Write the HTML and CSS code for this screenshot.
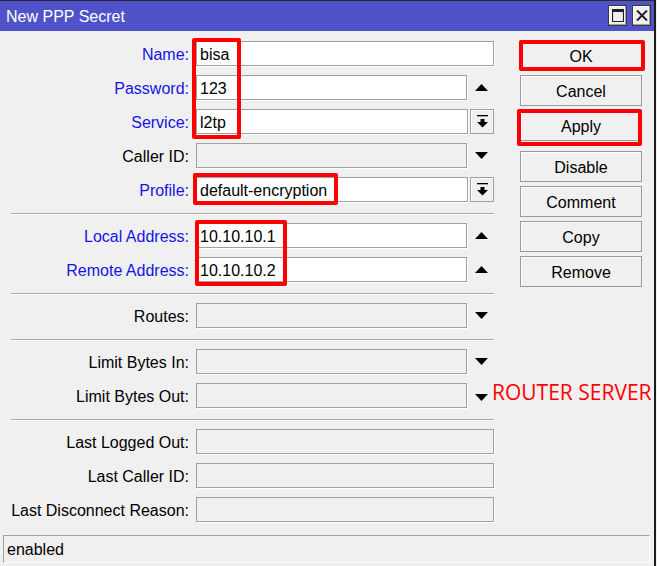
FILE: index.html
```html
<!DOCTYPE html>
<html lang="en">
<head>
    <meta charset="UTF-8">
    <meta name="viewport" content="width=device-width, initial-scale=1.0">
    <title>New PPP Secret</title>
    <link rel="stylesheet" href="styles.css">
</head>
<body>
    <div class="window">
        <!-- Barra de titulo -->
        <div class="titlebar">
            <span class="title">New PPP Secret</span>
            <div class="title-btns">
                <span class="tbtn">
                    <svg width="12" height="13" viewBox="0 0 12 13"><path d="M0.5 0.5 H11.5 V12.5 H0.5 Z M0.5 2 H11.5" fill="none" stroke="#222" stroke-width="1.2"/><rect x="0" y="0" width="12" height="3" fill="#222"/></svg>
                </span>
                <span class="tbtn">
                    <svg width="12" height="11" viewBox="0 0 12 11"><path d="M1 0.5 L11 10.5 M11 0.5 L1 10.5" stroke="#222" stroke-width="2"/></svg>
                </span>
            </div>
        </div>

        <div class="content">
            <!-- Campos do formulario -->
            <div class="form">
                <div class="row">
                    <span class="lbl blue">Name:</span>
                    <div class="field"><div class="input white">bisa</div></div>
                </div>
                <div class="row">
                    <span class="lbl blue">Password:</span>
                    <div class="field">
                        <div class="input white">123</div>
                        <span class="arrow"><svg width="13" height="7" viewBox="0 0 13 7"><path d="M6.5 0 L13 7 H0 Z"/></svg></span>
                    </div>
                </div>
                <div class="row">
                    <span class="lbl blue">Service:</span>
                    <div class="field">
                        <div class="input white">l2tp</div>
                        <span class="pick"><svg width="11" height="13" viewBox="0 0 11 13"><rect x="0" y="0" width="11" height="1.3"/><rect x="3.5" y="4" width="4" height="3.5"/><path d="M0 7 H11 L5.5 12.5 Z"/></svg></span>
                    </div>
                </div>
                <div class="row">
                    <span class="lbl">Caller ID:</span>
                    <div class="field">
                        <div class="input"></div>
                        <span class="arrow"><svg width="13" height="7" viewBox="0 0 13 7"><path d="M0 0 H13 L6.5 7 Z"/></svg></span>
                    </div>
                </div>
                <div class="row">
                    <span class="lbl blue">Profile:</span>
                    <div class="field">
                        <div class="input white">default-encryption</div>
                        <span class="pick"><svg width="11" height="13" viewBox="0 0 11 13"><rect x="0" y="0" width="11" height="1.3"/><rect x="3.5" y="4" width="4" height="3.5"/><path d="M0 7 H11 L5.5 12.5 Z"/></svg></span>
                    </div>
                </div>

                <div class="sep"></div>

                <div class="row">
                    <span class="lbl blue">Local Address:</span>
                    <div class="field">
                        <div class="input white">10.10.10.1</div>
                        <span class="arrow"><svg width="13" height="7" viewBox="0 0 13 7"><path d="M6.5 0 L13 7 H0 Z"/></svg></span>
                    </div>
                </div>
                <div class="row">
                    <span class="lbl blue">Remote Address:</span>
                    <div class="field">
                        <div class="input white">10.10.10.2</div>
                        <span class="arrow"><svg width="13" height="7" viewBox="0 0 13 7"><path d="M6.5 0 L13 7 H0 Z"/></svg></span>
                    </div>
                </div>

                <div class="sep"></div>

                <div class="row">
                    <span class="lbl">Routes:</span>
                    <div class="field">
                        <div class="input"></div>
                        <span class="arrow"><svg width="13" height="7" viewBox="0 0 13 7"><path d="M0 0 H13 L6.5 7 Z"/></svg></span>
                    </div>
                </div>

                <div class="sep"></div>

                <div class="row">
                    <span class="lbl">Limit Bytes In:</span>
                    <div class="field">
                        <div class="input"></div>
                        <span class="arrow"><svg width="13" height="7" viewBox="0 0 13 7"><path d="M0 0 H13 L6.5 7 Z"/></svg></span>
                    </div>
                </div>
                <div class="row">
                    <span class="lbl">Limit Bytes Out:</span>
                    <div class="field">
                        <div class="input"></div>
                        <span class="arrow low"><svg width="13" height="7" viewBox="0 0 13 7"><path d="M0 0 H13 L6.5 7 Z"/></svg></span>
                    </div>
                </div>

                <div class="sep"></div>

                <div class="row">
                    <span class="lbl">Last Logged Out:</span>
                    <div class="field"><div class="input"></div></div>
                </div>
                <div class="row">
                    <span class="lbl">Last Caller ID:</span>
                    <div class="field"><div class="input"></div></div>
                </div>
                <div class="row">
                    <span class="lbl">Last Disconnect Reason:</span>
                    <div class="field"><div class="input"></div></div>
                </div>
            </div>

            <!-- Botoes laterais -->
            <div class="buttons">
                <div class="btn">OK</div>
                <div class="btn">Cancel</div>
                <div class="btn">Apply</div>
                <div class="btn gap">Disable</div>
                <div class="btn">Comment</div>
                <div class="btn">Copy</div>
                <div class="btn">Remove</div>
            </div>
        </div>

        <div class="status">enabled</div>

        <!-- Marcacoes vermelhas por cima -->
        <div class="mark mark-user"></div>
        <div class="mark mark-profile"></div>
        <div class="mark mark-addr"></div>
        <div class="mark mark-ok"></div>
        <div class="mark mark-apply"></div>
        <div class="note">ROUTER SERVER</div>
    </div>
</body>
</html>
```

FILE: styles.css
```css
html, body {
    margin: 0;
    padding: 0;
    width: 100%;
    height: 100%;
    overflow: hidden;
}

body {
    background: #f0f0f0;
    font-family: "Liberation Sans", Arial, sans-serif;
    font-size: 16px;
    color: #000;
}

.window {
    position: relative;
    width: 654px;
    height: 566px;
    background: #f0f0f0;
    border-right: 2px solid #1c1c1c;
}

/* Barra de titulo */
.titlebar {
    box-sizing: border-box;
    height: 31px;
    border-top: 1px solid #2a2a2a;
    background: #4f52c9;
    display: flex;
    align-items: center;
    justify-content: space-between;
    padding: 0 3px 0 6px;
}

.title {
    color: #fff;
    font-size: 16px;
    padding-top: 1px;
}

.title-btns {
    display: flex;
    gap: 5px;
    padding-bottom: 2px;
}

.tbtn {
    box-sizing: border-box;
    width: 19px;
    height: 21px;
    border: 1px solid #3a3a3a;
    background: #f0f0f0;
    box-shadow: inset -1px -1px 0 #a0a0a0, inset 1px 1px 0 #fff;
    display: flex;
    align-items: center;
    justify-content: center;
}

.content {
    display: flex;
    align-items: flex-start;
}

/* Formulario */
.form {
    width: 483px;
    padding: 10px 0 0 11px;
    display: flex;
    flex-direction: column;
    gap: 9px;
}

.row {
    display: grid;
    grid-template-columns: 178px 298px;
    column-gap: 7px;
    align-items: center;
    height: 25px;
}

.lbl {
    text-align: right;
    white-space: nowrap;
    padding-top: 2px;
}

.lbl.blue {
    color: #1414e6;
}

.field {
    display: flex;
    height: 25px;
}

.input {
    flex: 1;
    box-sizing: border-box;
    height: 25px;
    border: 1px solid #a0a0a0;
    box-shadow: 1px 1px 0 #fff;
    background: #f0f0f0;
    padding: 1px 0 0 3px;
    line-height: 23px;
    white-space: nowrap;
}

.input.white {
    background: #fff;
}

.arrow {
    width: 26px;
    display: flex;
    align-items: center;
    justify-content: center;
    padding-left: 1px;
}

.arrow.low {
    padding-top: 3px;
}

.pick {
    box-sizing: border-box;
    width: 24px;
    margin-left: 2px;
    border: 1px solid #a0a0a0;
    box-shadow: inset 1px 1px 0 #fff;
    display: flex;
    align-items: center;
    justify-content: center;
}

.sep {
    margin-top: 2px;
    height: 0;
    border-top: 1px solid #a8a8a8;
    box-shadow: 0 1px 0 #fff;
}

/* Botoes */
.buttons {
    width: 122px;
    margin-left: 26px;
    padding-top: 9px;
    display: flex;
    flex-direction: column;
    gap: 4px;
}

.btn {
    box-sizing: border-box;
    height: 31px;
    border: 1px solid #9a9a9a;
    box-shadow: inset 1px 1px 0 #fff;
    background: #f0f0f0;
    text-align: center;
    line-height: 29px;
    padding-top: 1px;
}

.btn.gap {
    margin-top: 6px;
}

/* Barra de estado */
.status {
    box-sizing: border-box;
    margin: 13px 0 0 3px;
    width: 647px;
    height: 28px;
    border-top: 1px solid #a0a0a0;
    border-left: 1px solid #a0a0a0;
    border-right: 1px solid #fff;
    border-bottom: 1px solid #fff;
    padding: 1px 0 0 3px;
    line-height: 26px;
}

/* Marcacoes vermelhas */
.mark {
    position: absolute;
    box-sizing: border-box;
    border: 4px solid #ff0000;
    border-radius: 2px;
}

.mark-user { left: 192px; top: 38px; width: 49px; height: 101px; }
.mark-profile { left: 193px; top: 173px; width: 145px; height: 32px; }
.mark-addr { left: 195px; top: 220px; width: 92px; height: 66px; }
.mark-ok { left: 519px; top: 40px; width: 126px; height: 31px; }
.mark-apply { left: 517px; top: 109px; width: 125px; height: 37px; }

.note {
    position: absolute;
    left: 492px;
    top: 378px;
    color: #ff0000;
    font-family: "Open Sans", sans-serif;
    font-size: 21px;
    white-space: nowrap;
}
```
